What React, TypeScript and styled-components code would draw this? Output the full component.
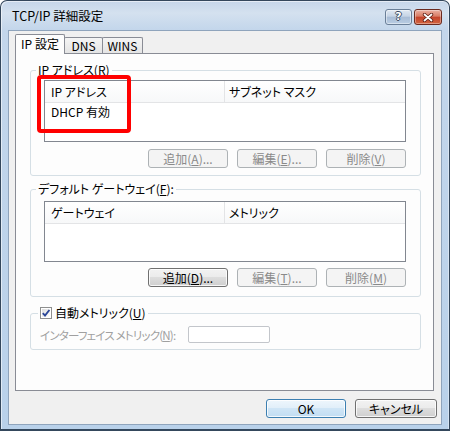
import React from 'react'
import styled, { createGlobalStyle } from 'styled-components'

const GlobalStyle = createGlobalStyle`
  html, body {
    margin: 0;
    padding: 0;
    background: #ffffff;
  }
  body {
    font-family: 'Noto Sans CJK JP', 'Noto Sans', sans-serif;
    font-size: 12px;
    font-feature-settings: 'palt';
    color: #000000;
  }
  * {
    box-sizing: border-box;
  }
`

const Window = styled.div`
  width: 450px;
  height: 431px;
  display: flex;
  flex-direction: column;
  border: 1px solid #34475c;
  border-bottom-width: 2px;
  border-radius: 7px 7px 0 0;
  padding: 0 7px 4px;
  background: linear-gradient(
    180deg,
    #c6d6ea 0,
    #d4e1ef 12px,
    #c3d6eb 29px,
    #b9d1ea 100%
  );
  box-shadow: inset 1px 1px 0 rgba(255, 255, 255, 0.55),
    inset -1px 0 0 rgba(255, 255, 255, 0.4);
`

const TitleBar = styled.div`
  height: 29px;
  display: flex;
  align-items: flex-start;
  padding-left: 4px;
`

const Title = styled.div`
  margin-top: 7px;
  line-height: 16px;
  font-size: 12.5px;
  color: #000000;
`

const CaptionButtons = styled.div`
  margin-left: auto;
  margin-top: 8px;
  display: flex;
  gap: 2px;
`

const HelpButton = styled.div`
  width: 27px;
  height: 16px;
  border: 1px solid #6a7f98;
  border-radius: 3px;
  display: flex;
  align-items: center;
  justify-content: center;
  background: linear-gradient(
    180deg,
    #dfe8f2 0%,
    #c6d4e5 45%,
    #a8bcd5 50%,
    #b9cde3 100%
  );
  box-shadow: inset 0 0 0 1px rgba(255, 255, 255, 0.45);
  color: #ffffff;
  font-family: 'DejaVu Sans', sans-serif;
  font-weight: bold;
  font-size: 11px;
  line-height: 14px;
  text-shadow: 1px 0 0 #3d4d62, -1px 0 0 #3d4d62, 0 1px 0 #3d4d62,
    0 -1px 0 #3d4d62;
`

const CloseButton = styled.div`
  width: 28px;
  height: 16px;
  border: 1px solid #6b2a1f;
  border-radius: 3px;
  display: flex;
  align-items: center;
  justify-content: center;
  background: linear-gradient(
    180deg,
    #eab0a2 0%,
    #d97c64 45%,
    #c4432b 50%,
    #d2643f 100%
  );
  box-shadow: inset 0 0 0 1px rgba(255, 255, 255, 0.35);
`

const Client = styled.div`
  flex: 1;
  display: flex;
  flex-direction: column;
  background: #f0f0f0;
  border: 1px solid #8fa4bc;
  padding: 3px 7px 0 6px;
`

const TabStrip = styled.div`
  height: 19px;
  display: flex;
  align-items: flex-end;
`

const Tab = styled.div<{ $active?: boolean; $w: number }>`
  position: relative;
  width: ${({ $w }) => $w}px;
  height: ${({ $active }) => ($active ? 20 : 16)}px;
  margin-bottom: ${({ $active }) => ($active ? -1 : 0)}px;
  z-index: ${({ $active }) => ($active ? 1 : 0)};
  border: 1px solid #898c95;
  border-bottom: none;
  border-radius: 2px 2px 0 0;
  display: flex;
  align-items: center;
  justify-content: center;
  padding-bottom: ${({ $active }) => ($active ? 2 : 0)}px;
  background: ${({ $active }) =>
    $active ? '#fdfdfd' : 'linear-gradient(180deg, #f5f5f5 0%, #e4e4e4 100%)'};
  line-height: 14px;

  & + & {
    margin-left: -1px;
  }
`

const Panel = styled.div`
  height: 338px;
  border: 1px solid #898c95;
  background: #fdfdfd;
  display: flex;
  flex-direction: column;
  padding: 0 12px 0 14px;
`

const Group = styled.div<{ $top: number; $bottom: number; $left?: number }>`
  margin-top: ${({ $top }) => $top}px;
  border: 1px solid #d5dfe5;
  border-radius: 3px;
  padding: 0 14px ${({ $bottom }) => $bottom}px
    ${({ $left }) => $left ?? 13}px;
  display: flex;
  flex-direction: column;
`

const GroupLabel = styled.div<{ $indent: number; $after: number }>`
  width: fit-content;
  height: 16px;
  line-height: 16px;
  margin: -9px 0 ${({ $after }) => $after}px ${({ $indent }) => $indent}px;
  padding: 0 2px;
  background: #fdfdfd;
  display: flex;
  align-items: center;
  gap: 3px;
`

const ListView = styled.div<{ $h: number }>`
  position: relative;
  height: ${({ $h }) => $h}px;
  border: 1px solid #828790;
  background: #ffffff;
`

const ListHeader = styled.div`
  height: 22px;
  display: flex;
  border-bottom: 1px solid #e3e4e6;
  background: linear-gradient(180deg, #ffffff 0%, #f7f8f9 100%);
`

const HeaderCell = styled.div<{ $w?: number }>`
  ${({ $w }) => ($w ? `width: ${$w}px; flex: none;` : 'flex: 1;')}
  line-height: 21px;
  padding-left: ${({ $w }) => ($w ? 6 : 4)}px;
  border-right: ${({ $w }) => ($w ? '1px solid #e3e4e6' : 'none')};
  white-space: nowrap;
`

const ListRow = styled.div`
  height: 18px;
  line-height: 18px;
  padding-left: 6px;
`

const Highlight = styled.div`
  position: absolute;
  left: -8px;
  top: -6px;
  width: 94px;
  height: 58px;
  border: 4px solid #ff0000;
  border-radius: 4px;
  pointer-events: none;
`

const ButtonRow = styled.div<{ $top: number }>`
  margin-top: ${({ $top }) => $top}px;
  display: flex;
  justify-content: flex-end;
  gap: 9px;
`

type Variant = 'disabled' | 'normal' | 'default'

const Button = styled.div<{ $variant: Variant; $w?: number }>`
  width: ${({ $w }) => $w ?? 80}px;
  height: 19px;
  border-radius: 3px;
  display: flex;
  align-items: center;
  justify-content: center;
  line-height: 17px;
  white-space: nowrap;
  border: 1px solid
    ${({ $variant }) =>
      $variant === 'disabled'
        ? '#adb2b5'
        : $variant === 'default'
        ? '#3c7fb1'
        : '#707070'};
  color: ${({ $variant }) => ($variant === 'disabled' ? '#8a8a8a' : '#000000')};
  background: ${({ $variant }) =>
    $variant === 'disabled'
      ? '#f4f4f4'
      : $variant === 'default'
      ? 'linear-gradient(180deg, #eef6fc 0%, #e0eef9 50%, #cfe5f6 50%, #c2ddf2 100%)'
      : 'linear-gradient(180deg, #f2f2f2 0%, #ebebeb 50%, #dddddd 50%, #cfcfcf 100%)'};
  box-shadow: ${({ $variant }) =>
    $variant === 'disabled' ? 'none' : 'inset 0 0 0 1px rgba(255,255,255,0.8)'};
`

const MetricRow = styled.div`
  margin-top: 5px;
  display: flex;
  align-items: center;
  height: 17px;
`

const MetricLabel = styled.div`
  width: 148px;
  color: #a0a0a0;
  white-space: nowrap;
  font-size: 11.5px;
  letter-spacing: -0.8px;
`

const MetricInput = styled.div`
  width: 82px;
  height: 17px;
  border: 1px solid #c3c6cb;
  border-radius: 2px;
  background: #ffffff;
`

const Footer = styled.div`
  margin-top: 8px;
  margin-right: -3px;
  display: flex;
  justify-content: flex-end;
  gap: 9px;
`

const Key = styled.span`
  text-decoration: underline;
  text-underline-offset: 1px;
`

const CloseIcon = () => (
  <svg width="12" height="9" viewBox="0 0 12 9">
    <path
      d="M2.5 1.5 L9.5 7.5 M9.5 1.5 L2.5 7.5"
      stroke="#5a1c12"
      strokeWidth="3.4"
      strokeLinecap="round"
    />
    <path
      d="M2.5 1.5 L9.5 7.5 M9.5 1.5 L2.5 7.5"
      stroke="#ffffff"
      strokeWidth="1.8"
      strokeLinecap="round"
    />
  </svg>
)

const CheckBox = () => (
  <svg width="12" height="12" viewBox="0 0 12 12">
    <defs>
      <linearGradient id="cbFill" x1="0" y1="0" x2="1" y2="1">
        <stop offset="0" stopColor="#dcdcdc" />
        <stop offset="1" stopColor="#ffffff" />
      </linearGradient>
    </defs>
    <rect x="0.5" y="0.5" width="11" height="11" fill="#ffffff" stroke="#8e8f8f" />
    <rect x="2" y="2" width="8" height="8" fill="url(#cbFill)" />
    <path
      d="M2.8 6.2 L5 8.6 L9.4 3"
      fill="none"
      stroke="#2a4698"
      strokeWidth="1.9"
    />
  </svg>
)

export default function App() {
  return (
    <>
      <GlobalStyle />
      <Window>
        <TitleBar>
          <Title>TCP/IP 詳細設定</Title>
          <CaptionButtons>
            <HelpButton>?</HelpButton>
            <CloseButton>
              <CloseIcon />
            </CloseButton>
          </CaptionButtons>
        </TitleBar>

        <Client>
          <TabStrip>
            <Tab $active $w={50}>
              IP 設定
            </Tab>
            <Tab $w={39}>DNS</Tab>
            <Tab $w={41}>WINS</Tab>
          </TabStrip>

          <Panel>
            <Group $top={16} $bottom={7}>
              <GroupLabel $indent={-8} $after={2}>
                <span>
                  IP アドレス(<Key>R</Key>)
                </span>
              </GroupLabel>
              <ListView $h={62}>
                <ListHeader>
                  <HeaderCell $w={180}>IP アドレス</HeaderCell>
                  <HeaderCell>サブネット マスク</HeaderCell>
                </ListHeader>
                <ListRow>DHCP 有効</ListRow>
                <Highlight />
              </ListView>
              <ButtonRow $top={7}>
                <Button $variant="disabled">
                  追加(<Key>A</Key>)...
                </Button>
                <Button $variant="disabled">
                  編集(<Key>E</Key>)...
                </Button>
                <Button $variant="disabled">
                  削除(<Key>V</Key>)
                </Button>
              </ButtonRow>
            </Group>

            <Group $top={13} $bottom={9}>
              <GroupLabel $indent={-8} $after={4}>
                <span>
                  デフォルト ゲートウェイ(<Key>F</Key>):
                </span>
              </GroupLabel>
              <ListView $h={61}>
                <ListHeader>
                  <HeaderCell $w={180}>ゲートウェイ</HeaderCell>
                  <HeaderCell>メトリック</HeaderCell>
                </ListHeader>
              </ListView>
              <ButtonRow $top={6}>
                <Button $variant="normal">
                  追加(<Key>D</Key>)...
                </Button>
                <Button $variant="disabled">
                  編集(<Key>T</Key>)...
                </Button>
                <Button $variant="disabled">
                  削除(<Key>M</Key>)
                </Button>
              </ButtonRow>
            </Group>

            <Group $top={16} $bottom={6} $left={9}>
              <GroupLabel $indent={-2} $after={0}>
                <CheckBox />
                <span>
                  自動メトリック(<Key>U</Key>)
                </span>
              </GroupLabel>
              <MetricRow>
                <MetricLabel>
                  インターフェイス メトリック(<Key>N</Key>):
                </MetricLabel>
                <MetricInput />
              </MetricRow>
            </Group>
          </Panel>

          <Footer>
            <Button $variant="default" $w={80}>
              OK
            </Button>
            <Button $variant="normal" $w={82}>
              キャンセル
            </Button>
          </Footer>
        </Client>
      </Window>
    </>
  )
}
